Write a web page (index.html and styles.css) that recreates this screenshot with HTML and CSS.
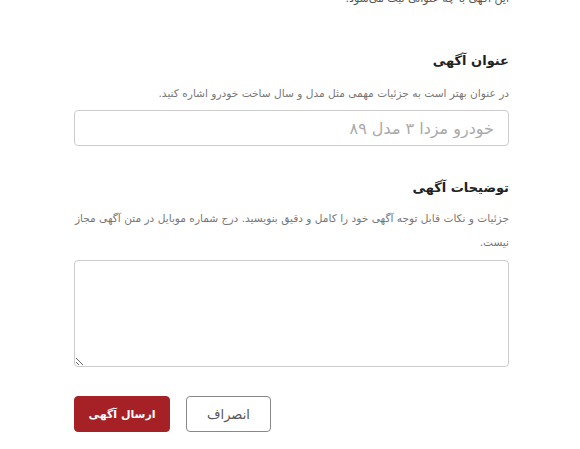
FILE: index.html
```html
<!DOCTYPE html>
<html lang="fa" dir="rtl">
<head>
    <meta charset="UTF-8">
    <meta name="viewport" content="width=device-width, initial-scale=1.0">
    <title>ثبت آگهی</title>
    <link rel="stylesheet" href="styles.css">
</head>
<body>
    <main class="form">
        <p class="intro">این آگهی با چه عنوانی ثبت می‌شود.</p>

        <section class="field">
            <h2>عنوان آگهی</h2>
            <p class="hint">در عنوان بهتر است به جزئیات مهمی مثل مدل و سال ساخت خودرو اشاره کنید.</p>
            <input type="text" class="input" placeholder="خودرو مزدا ۳ مدل ۸۹">
        </section>

        <section class="field">
            <h2>توضیحات آگهی</h2>
            <p class="hint long">جزئیات و نکات قابل توجه آگهی خود را کامل و دقیق بنویسید. درج شماره موبایل در متن آگهی مجاز نیست.</p>
            <textarea class="input area"></textarea>
        </section>

        <div class="actions">
            <button class="btn cancel">انصراف</button>
            <button class="btn submit">ارسال آگهی</button>
        </div>
    </main>
</body>
</html>
```

FILE: styles.css
```css
body {
    margin: 0;
    background: #fff;
    font-family: "DejaVu Sans", sans-serif;
    color: #222;
}
.form {
    width: 435px;
    margin-right: 71px;
}
.intro {
    margin: -8px 0 0;
    font-size: 11px;
    line-height: 14px;
    color: #555;
}
.field {
    margin-top: 45px;
}
.field + .field {
    margin-top: 32px;
}
.field h2 {
    margin: 0;
    font-size: 13px;
    line-height: 20px;
    font-weight: bold;
    color: #222;
}
.hint {
    margin: 10px 0 5px;
    font-size: 10.6px;
    line-height: 24px;
    color: #777;
}
.hint.long {
    margin: 8px 0 6px;
}
.input {
    display: block;
    box-sizing: border-box;
    width: 100%;
    height: 36px;
    padding: 0 14px;
    border: 1px solid #ccc;
    border-radius: 4px;
    font-family: inherit;
    font-size: 16px;
    color: #333;
}
.input::placeholder {
    color: #aaa;
}
.area {
    height: 107px;
    resize: vertical;
}
.actions {
    display: flex;
    gap: 16px;
    justify-content: flex-end;
    margin-top: 29px;
}
.btn {
    height: 36px;
    border-radius: 4px;
    font-family: inherit;
}
.submit {
    width: 96px;
    background: #a62126;
    border: 1px solid #a62126;
    color: #fff;
    font-size: 11px;
    font-weight: bold;
}
.cancel {
    width: 85px;
    background: #fff;
    border: 1px solid #888;
    color: #555;
    font-size: 13px;
}
```
